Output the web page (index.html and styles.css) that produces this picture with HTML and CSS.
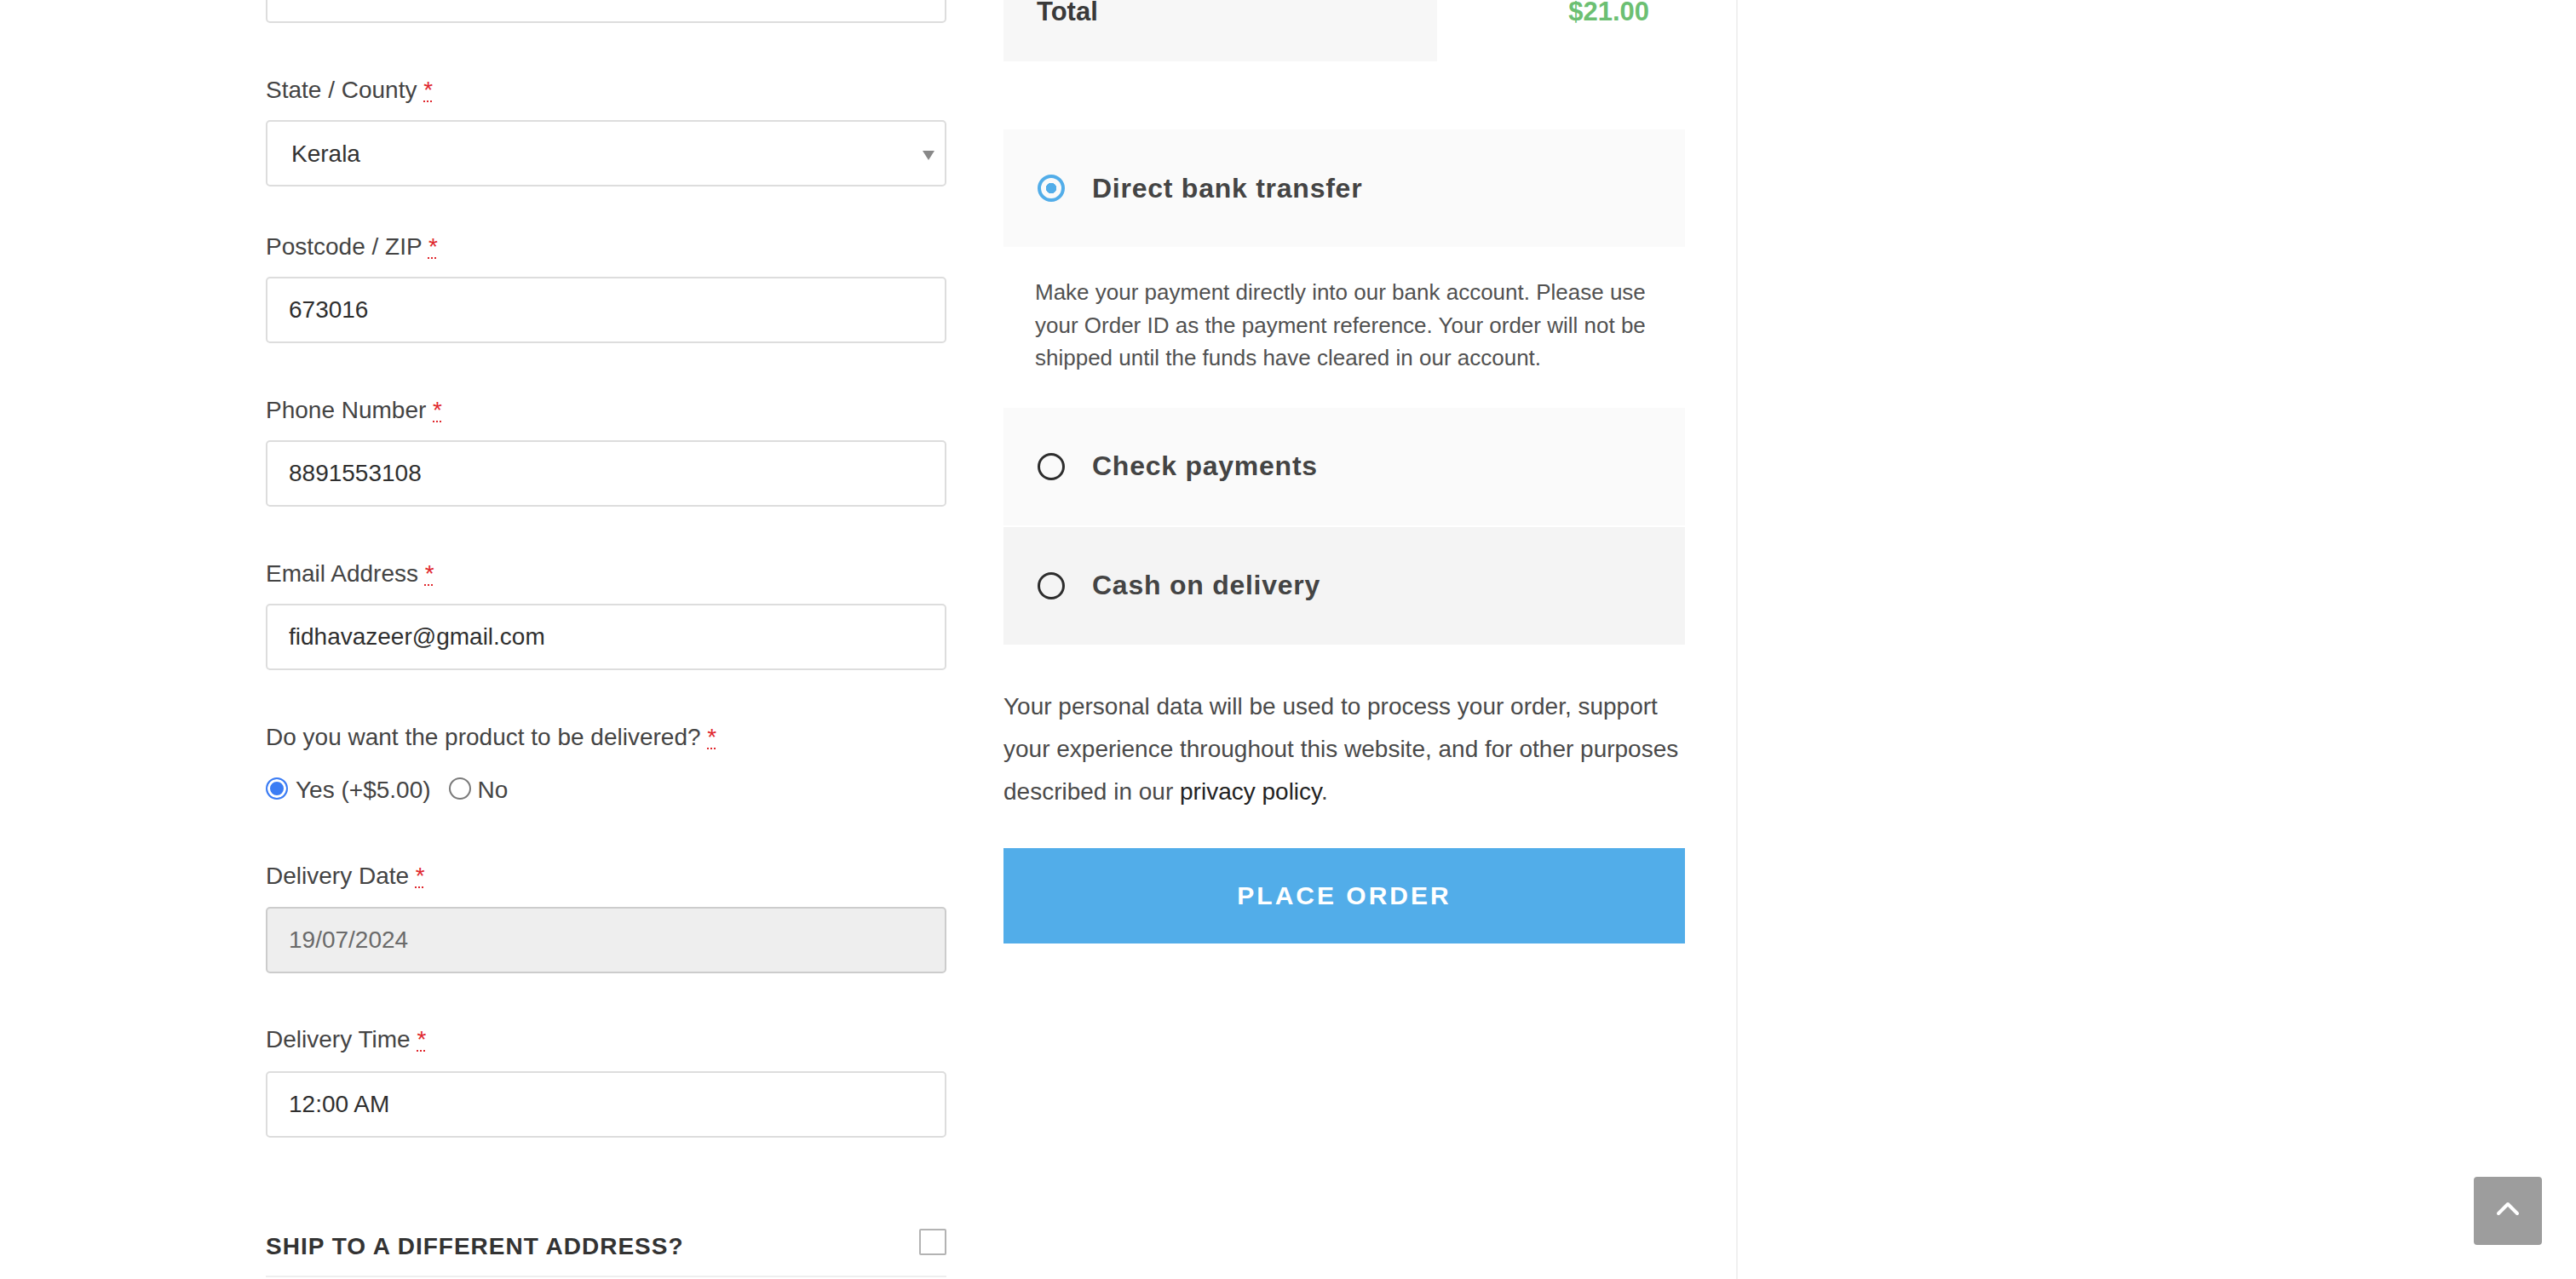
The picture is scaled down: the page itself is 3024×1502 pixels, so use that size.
FILE: index.html
```html
<!DOCTYPE html>
<html lang="en">
<head>
<meta charset="utf-8">
<title>Checkout</title>
<link rel="stylesheet" href="styles.css">
</head>
<body>
<div class="page">
  <div class="checkout">
    <section class="billing">
      <div class="field field-city">
        <input class="input" type="text" aria-label="Town / City">
      </div>

      <div class="field field-state">
        <div class="label">State / County <abbr class="req" title="required">*</abbr></div>
        <div class="select"><span class="select-value">Kerala</span><span class="select-arrow"></span></div>
      </div>

      <div class="field">
        <div class="label">Postcode / ZIP <abbr class="req" title="required">*</abbr></div>
        <input class="input" type="text" value="673016">
      </div>

      <div class="field">
        <div class="label">Phone Number <abbr class="req" title="required">*</abbr></div>
        <input class="input" type="text" value="8891553108">
      </div>

      <div class="field field-email">
        <div class="label">Email Address <abbr class="req" title="required">*</abbr></div>
        <input class="input" type="text" value="fidhavazeer@gmail.com">
      </div>

      <div class="field field-delivery">
        <div class="label">Do you want the product to be delivered? <abbr class="req" title="required">*</abbr></div>
        <div class="radio-row">
          <span class="radio-opt"><span class="radio radio-on"></span>Yes (+$5.00)</span>
          <span class="radio-opt radio-opt-no"><span class="radio"></span>No</span>
        </div>
      </div>

      <div class="field field-date">
        <div class="label">Delivery Date <abbr class="req" title="required">*</abbr></div>
        <input class="input input-readonly" type="text" value="19/07/2024" readonly>
      </div>

      <div class="field field-time">
        <div class="label">Delivery Time <abbr class="req" title="required">*</abbr></div>
        <input class="input" type="text" value="12:00 AM">
      </div>

      <div class="ship">
        <h3 class="ship-title">Ship to a different address?</h3>
        <span class="checkbox"></span>
      </div>
    </section>

    <section class="review">
      <div class="total-row">
        <div class="total-th">Total</div>
        <div class="total-td">$21.00</div>
      </div>

      <div class="payment">
        <div class="method method-first">
          <span class="pradio pradio-on"></span>
          <span class="method-label">Direct bank transfer</span>
        </div>
        <div class="method-desc">Make your payment directly into our bank account. Please use your Order ID as the payment reference. Your order will not be shipped until the funds have cleared in our account.</div>
        <div class="method">
          <span class="pradio"></span>
          <span class="method-label">Check payments</span>
        </div>
        <div class="method method-hover">
          <span class="pradio"></span>
          <span class="method-label">Cash on delivery</span>
        </div>
      </div>

      <p class="privacy">Your personal data will be used to process your order, support your experience throughout this website, and for other purposes described in our <a class="privacy-link" href="#">privacy policy</a>.</p>

      <button class="place-order" type="button">Place order</button>
    </section>
  </div>
</div>

<a class="scroll-top" href="#" aria-label="Scroll to top">
  <svg width="80" height="80" viewBox="0 0 80 80" aria-hidden="true">
    <path d="M29 43 L40 32 L51 43" fill="none" stroke="#ffffff" stroke-width="4" stroke-linecap="round" stroke-linejoin="round"/>
  </svg>
</a>
</body>
</html>
```

FILE: styles.css
```css
* {
  box-sizing: border-box;
}

html, body {
  margin: 0;
  padding: 0;
  background: #ffffff;
}

body {
  font-family: "Liberation Sans", Arial, Helvetica, sans-serif;
  color: #444444;
}

.page {
  height: 100vh;
  overflow: hidden;
}

.checkout {
  display: flex;
  align-items: flex-start;
  width: 2040px;
  height: 100%;
  padding-left: 312px;
  padding-right: 60px;
  border-right: 2px solid #f0f0f0;
}

/* ---------- billing column ---------- */

.billing {
  width: 799px;
  flex: none;
}

.field {
  margin-bottom: 56px;
}

.field-city {
  margin-top: -51px;
  margin-bottom: 56px;
}

.field-state {
  margin-bottom: 48px;
}

.field-state .label {
  margin-bottom: 14px;
}

.field-date .label {
  margin-bottom: 15px;
}

.field-email {
  margin-bottom: 56px;
}

.field-delivery {
  margin-bottom: 57px;
}

.field-date {
  margin-bottom: 55px;
}

.field-time .label {
  margin-bottom: 16px;
}

.field-time {
  margin-bottom: 107px;
}

.label {
  display: block;
  padding-top: 2px;
  font-size: 28px;
  line-height: 42px;
  color: #444444;
  margin-bottom: 14px;
}

.req {
  color: #e0282e;
  text-decoration: underline dotted #e0282e;
  text-decoration-thickness: 2px;
  text-underline-offset: 3px;
  cursor: help;
}

.input {
  display: block;
  width: 100%;
  height: 78px;
  margin: 0;
  padding: 0 25px;
  border: 2px solid #dddddd;
  border-radius: 5px;
  background: #ffffff;
  font-family: "Liberation Sans", Arial, Helvetica, sans-serif;
  font-size: 28px;
  color: #2f2f2f;
  outline: none;
}

.input-readonly {
  background: #eeeeee;
  border-color: #cccccc;
  color: #6a6a6a;
}

.select {
  display: flex;
  align-items: center;
  justify-content: space-between;
  height: 78px;
  padding: 2px 12px 0 28px;
  border: 2px solid #dddddd;
  border-radius: 5px;
  font-size: 28px;
  color: #333333;
}

.select-arrow {
  width: 0;
  height: 0;
  margin-top: 2px;
  border-left: 7px solid transparent;
  border-right: 7px solid transparent;
  border-top: 11px solid #888888;
}

.radio-row {
  display: flex;
  align-items: center;
  margin-top: 20px;
  font-size: 28px;
  line-height: 42px;
  color: #444444;
}

.radio-opt {
  display: flex;
  align-items: center;
}

.radio-opt-no {
  margin-left: 21px;
}

.radio {
  width: 26px;
  height: 26px;
  margin-right: 9px;
  margin-bottom: 4px;
  border: 2px solid #7a7a7a;
  border-radius: 50%;
  background: #ffffff;
  flex: none;
}

.radio-opt-no .radio {
  margin-right: 8px;
}

.radio-on {
  border-color: #3b7cf4;
  background: #3b7cf4;
  box-shadow: inset 0 0 0 3px #ffffff;
}

.ship {
  display: flex;
  justify-content: space-between;
  align-items: flex-start;
  padding-bottom: 13px;
  border-bottom: 2px solid #eeeeee;
}

.ship-title {
  margin: 0;
  font-size: 28px;
  line-height: 42px;
  font-weight: 700;
  letter-spacing: 1px;
  text-transform: uppercase;
  color: #333333;
}

.checkbox {
  width: 32px;
  height: 31px;
  margin-top: 0;
  border: 2px solid #b3b3b3;
  border-radius: 2px;
  background: #ffffff;
}

/* ---------- review column ---------- */

.review {
  width: 800px;
  flex: none;
  margin-left: 67px;
}

.total-row {
  display: flex;
  height: 72px;
  font-size: 31px;
  line-height: 28px;
  font-weight: 700;
}

.total-th {
  width: 509px;
  padding-left: 39px;
  background: #f7f7f7;
  color: #3a3a3a;
}

.total-td {
  flex: 1;
  text-align: right;
  padding-right: 42px;
  color: #6cbf72;
}

.payment {
  margin-top: 80px;
}

.method {
  display: flex;
  align-items: center;
  height: 138px;
  padding-left: 40px;
  background: #fafafa;
}

.method-hover {
  margin-top: 2px;
  background: #f4f4f4;
}

.pradio {
  width: 32px;
  height: 32px;
  border: 3px solid #2d2d2d;
  border-radius: 50%;
  background: transparent;
  flex: none;
}

.pradio-on {
  border: 4px solid #52ade9;
  background: radial-gradient(circle, #52ade9 0 6px, transparent 6.5px);
}

.method-label {
  margin-left: 32px;
  font-size: 32px;
  font-weight: 700;
  letter-spacing: 0.75px;
  color: #444444;
}

.method-desc {
  padding: 34px 37px 39px;
  font-size: 26px;
  line-height: 38.5px;
  color: #515151;
}

.privacy {
  margin: 48px 0 0;
  font-size: 28px;
  line-height: 50.4px;
  color: #4a4a4a;
}

.privacy-link {
  color: #222222;
  text-decoration: none;
}

.place-order {
  display: block;
  width: 100%;
  height: 112px;
  margin-top: 40px;
  border: 0;
  border-radius: 0;
  background: #52ade9;
  color: #ffffff;
  font-family: "Liberation Sans", Arial, Helvetica, sans-serif;
  font-size: 30px;
  font-weight: 700;
  letter-spacing: 3px;
  text-transform: uppercase;
  cursor: pointer;
}

/* ---------- scroll to top ---------- */

.scroll-top {
  position: fixed;
  right: 40px;
  bottom: 40px;
  width: 80px;
  height: 80px;
  border-radius: 4px;
  background: #9d9d9d;
  display: block;
}

.scroll-top svg {
  display: block;
}
```
